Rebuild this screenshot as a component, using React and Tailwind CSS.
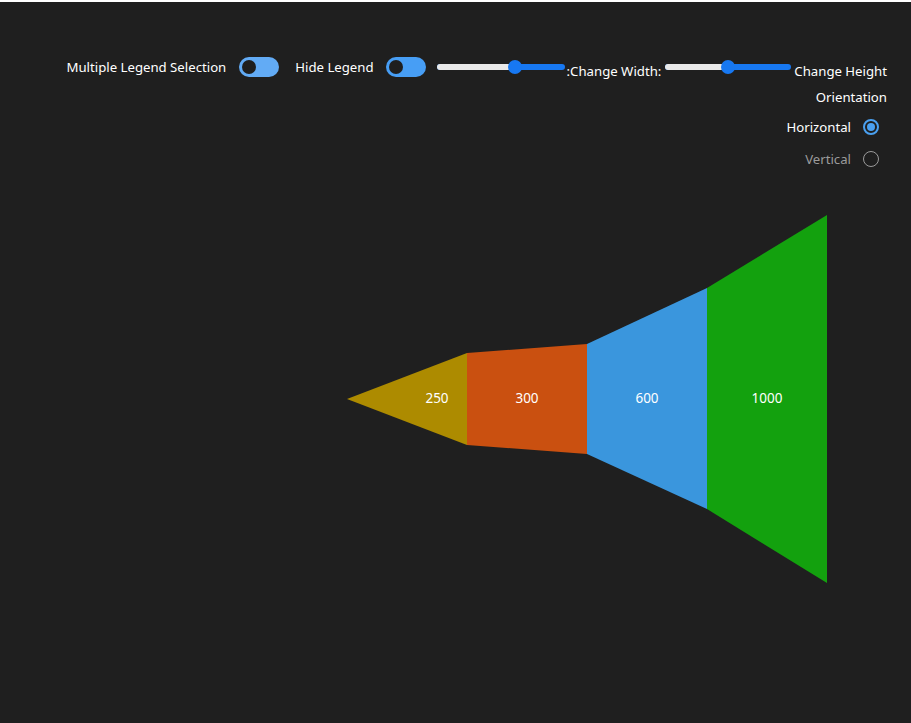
import React from "react";

const font = { fontFamily: "'Noto Sans', 'Open Sans', sans-serif" };

function Toggle({ color }) {
  return (
    <div className={`w-[40px] h-[20px] rounded-full flex items-center px-[3px] ${color}`}>
      <div className="w-[14px] h-[14px] rounded-full bg-[#1f1f1f]" />
    </div>
  );
}

function Slider({ width, pct }) {
  return (
    <div className="relative h-[20px] flex items-center" style={{ width }}>
      <div className="w-full h-[6px] rounded-full bg-[#1778f2] overflow-hidden flex">
        <div className="h-full bg-[#e9e9e9]" style={{ width: `${pct}%` }} />
      </div>
      <div
        className="absolute top-[3px] w-[14px] h-[14px] rounded-full bg-[#1778f2]"
        style={{ left: `calc(${pct}% - 7px)` }}
      />
    </div>
  );
}

export default function App() {
  return (
    <div className="min-h-[723px] bg-[#1f1f1f] border-t-2 border-white text-white text-[13.2px]" style={font}>
      <div className="flex justify-end items-center pr-6 pt-[55px] h-[75px]">
        <span className="leading-5">Multiple Legend Selection</span>
        <div className="ml-[13px]"><Toggle color="bg-[#62abf5]" /></div>
        <span className="ml-[16px] leading-5">Hide Legend</span>
        <div className="ml-[12px]"><Toggle color="bg-[#479ef5]" /></div>
        <div className="ml-[11px]"><Slider width={128} pct={61} /></div>
        <span className="ml-[2px] leading-5 mt-2">:Change Width:</span>
        <div className="ml-[4px]"><Slider width={126} pct={50} /></div>
        <span className="ml-[3px] leading-5 mt-2">Change Height</span>
      </div>
      <div className="flex flex-col items-end pr-6">
        <div className="mt-[10px] h-5 leading-5">Orientation</div>
        <div className="mt-[10px] h-5 flex items-center pr-2">
          <span className="leading-5">Horizontal</span>
          <div className="ml-3 w-4 h-4 rounded-full border-2 border-[#4aa0f0] flex items-center justify-center">
            <div className="w-[8px] h-[8px] rounded-full bg-[#4aa0f0]" />
          </div>
        </div>
        <div className="mt-3 h-5 flex items-center pr-2">
          <span className="leading-5 text-[#9b9b9b]">Vertical</span>
          <div className="ml-3 w-4 h-4 rounded-full border border-[#9b9b9b]" />
        </div>
      </div>
      <svg width="911" height="554" viewBox="0 169 911 554" className="block">
        <polygon points="347,399 467,353 467,445" fill="#ad8b00" />
        <polygon points="467,353 587,344 587,454 467,445" fill="#ca5010" />
        <polygon points="587,344 707,288 707,509 587,454" fill="#3a96dd" />
        <polygon points="707,288 827,215 827,583 707,509" fill="#13a10e" />
        <g fill="#ffffff" fontSize="13.5" textAnchor="middle" dominantBaseline="central" style={font}>
          <text x="437" y="398">250</text>
          <text x="527" y="398">300</text>
          <text x="647" y="398">600</text>
          <text x="767" y="398">1000</text>
        </g>
      </svg>
    </div>
  );
}
